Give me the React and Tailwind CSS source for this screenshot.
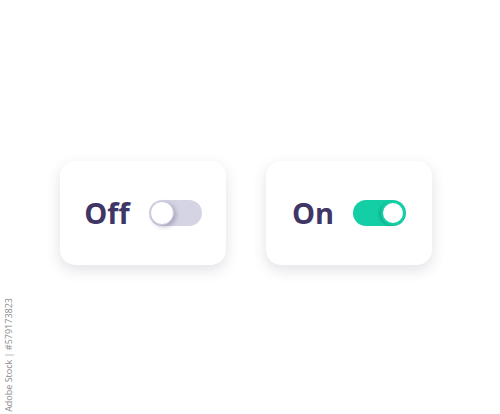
const Toggle = ({ on }) => {
  return (
    <div
      className={`flex h-[26px] w-[53px] items-center rounded-full px-[1px] ${
        on ? 'justify-end bg-[#14cfa6]' : 'justify-start bg-[#d4d4e4]'
      }`}
    >
      <div
        className={`h-[24px] w-[24px] rounded-full bg-white ${
          on ? 'border-2 border-[#14cfa6] shadow-[-2px_1px_3px_rgba(0,0,0,0.15)]' : 'border border-[#c9c8dc] shadow-[2px_2px_4px_rgba(60,55,100,0.3)]'
        }`}
      />
    </div>
  );
};

const Card = ({ label, on }) => {
  return (
    <div className="flex h-[104px] w-[166px] items-center justify-center gap-[19px] rounded-[15px] bg-white shadow-[0_5px_14px_rgba(70,70,110,0.16)]">
      <span className="-mt-[2px] text-[29px] font-bold leading-none text-[#3f3665] [font-family:'Open_Sans',sans-serif]">{label}</span>
      <Toggle on={on} />
    </div>
  );
};

const App = () => {
  return (
    <div className="relative h-[414px] w-[500px] overflow-hidden bg-white [font-family:'Open_Sans',sans-serif]">
      <div className="flex gap-[40px] pl-[60px] pt-[161px]">
        <Card label="Off" on={false} />
        <Card label="On" on />
      </div>
      <span className="absolute bottom-[2px] left-[4px] rotate-180 text-[9px] leading-none text-[#8a8a8a] [writing-mode:vertical-rl]">
        Adobe Stock | #579173823
      </span>
    </div>
  );
};

export default App;
